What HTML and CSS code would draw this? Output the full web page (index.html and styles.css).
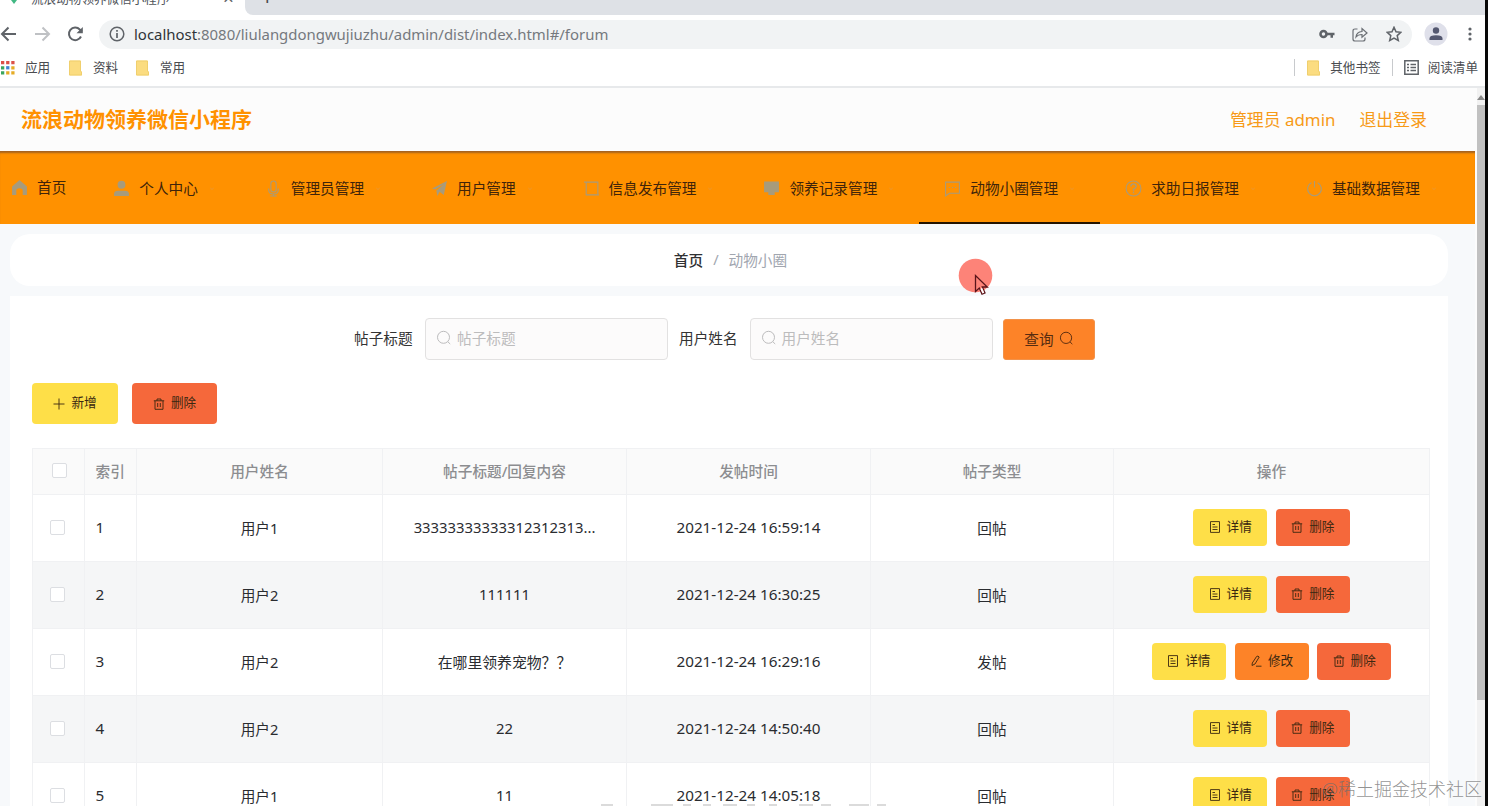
FILE: index.html
```html
<!DOCTYPE html>
<html lang="zh-CN">
<head>
<meta charset="utf-8">
<title>流浪动物领养微信小程序</title>
<link rel="stylesheet" href="styles.css">
</head>
<body>
<svg class="defs" width="0" height="0">
  <symbol id="search" viewBox="0 0 16 16"><circle cx="7.5" cy="7.3" r="6" fill="none" stroke="currentColor"/><path d="M11.8 11.7l2.4 2.3" fill="none" stroke="currentColor"/></symbol>
  <symbol id="trash" viewBox="0 0 12 12"><path d="M.8 2.8h10.4M4 2.8V1h4v1.800M2 2.800v8.500h8V2.800M4.700 5v4M7.300 5v4" fill="none" stroke="currentColor" stroke-width=".9"/></symbol>
  <symbol id="doc" viewBox="0 0 12 12"><path d="M1.500.6h9v10.800h-9zM3.500 3.500h2.500M3.500 6h5M3.500 8.500h5" fill="none" stroke="currentColor" stroke-width=".9"/></symbol>
  <symbol id="pen" viewBox="0 0 12 12"><path d="M2.300 8L6.600 1.500Q8 .4 9.200 2L5 9l-3 1.500zM6 11.200h5.500" fill="none" stroke="currentColor" stroke-width=".9"/></symbol>
  <symbol id="folder" viewBox="0 0 13 16"><path d="M1 .5h10q1 0 1 1V11l1 1v3q0 .5-.5.500H1q-1 0-1-1v-13q0-1 1-1z" fill="#fbdc80"/><path d="M.5 1v14h12v-3l-1-1V1z" fill="none" stroke="#edcb68" stroke-width=".8"/></symbol>
</svg>
<div class="screen">
  <div class="window">
    <div class="tabs">
      <div class="tab"><svg class="fav" width="10" height="5"><path d="M2 0h6L5 4z" fill="#41b883"/></svg><span class="tab-title">流浪动物领养微信小程序</span><span class="tab-x">×</span></div>
      <div class="strip"><span class="plus">+</span></div>
    </div>
    <div class="toolbar">
      <svg class="arrow" width="17" height="16" viewBox="0 0 17 16"><path d="M16 8H2M8.500 1.500L2 8l6.500 6.500" fill="none" stroke="#5f6368" stroke-width="2"/></svg>
      <svg class="arrow" width="17" height="16" viewBox="0 0 17 16"><path d="M1 8h14M8.500 1.500L15 8l-6.500 6.500" fill="none" stroke="#bfc1c4" stroke-width="2"/></svg>
      <svg class="arrow" width="17" height="16" viewBox="0 0 17 16"><path d="M14 10.500A6.300 6.300 0 1 1 12.800 3.500L15 5.500" fill="none" stroke="#5f6368" stroke-width="2"/><path d="M15.800 1v6.300H9.500z" fill="#5f6368"/></svg>
      <div class="address">
        <svg width="16" height="16" viewBox="0 0 16 16"><circle cx="8" cy="8" r="6.800" fill="none" stroke="#5f6368" stroke-width="1.500"/><path d="M8 7v5M8 4v1.700" stroke="#5f6368" stroke-width="1.700"/></svg>
        <span class="url"><b>localhost</b>:8080/liulangdongwujiuzhu/admin/dist/index.html#/forum</span>
        <svg class="key" width="16" height="10" viewBox="0 0 16 10"><circle cx="4.500" cy="5" r="3" fill="none" stroke="#5f6368" stroke-width="2.600"/><path d="M8 3.700h7.500v2.500H14V8.700h-2.500V6.200H8z" fill="#5f6368"/></svg>
        <svg class="share" width="16" height="15" viewBox="0 0 16 15"><path d="M5.500 2H3Q1 2 1 4v8q0 2 2 2h8q2 0 2-2v-1.500M4 10q.5-5 6-5.500V1.500L15 6l-5 4.200V7.500Q6 7.500 4 10z" fill="none" stroke="#6b6f74" stroke-width="1.200"/></svg>
        <svg width="16" height="16" viewBox="0 0 16 16"><path d="M8 1.300l2 4.500 4.900.5-3.700 3.300 1.100 4.900L8 12l-4.300 2.500 1.100-4.900L1.100 6.300 6 5.800z" fill="none" stroke="#5f6368" stroke-width="1.500"/></svg>
      </div>
      <svg class="avatar" width="24" height="24" viewBox="0 0 24 24"><circle cx="12" cy="12" r="11.500" fill="#dfe0ea"/><circle cx="12" cy="8.500" r="3.200" fill="#545870"/><path d="M5.500 18v-1.500q0-3.200 6.500-3.200t6.500 3.200V18z" fill="#545870"/></svg>
      <svg width="4" height="16" viewBox="0 0 4 16"><g fill="#5f6368"><circle cx="2" cy="3" r="1.600"/><circle cx="2" cy="8" r="1.600"/><circle cx="2" cy="13" r="1.600"/></g></svg>
    </div>
    <div class="bookmarks">
      <svg class="apps" width="14" height="14" viewBox="0 0 15 15"><path d="M0 0h3.500v3.500H0zM5.500 0H9v3.500H5.500zM11 0h3.500v3.500H11z" fill="#dc5148"/><path d="M0 5.500h3.500V9H0zM0 11h3.500v3.500H0z" fill="#3ba55d"/><path d="M5.500 5.500H9V9H5.500z" fill="#4285d4"/><path d="M11 5.500h3.500V9H11zM5.500 11H9v3.500H5.500zM11 11h3.500v3.500H11z" fill="#e5ac26"/></svg>
      <span class="bm b1">应用</span>
      <svg class="fold" width="13" height="16"><use href="#folder"/></svg><span class="bm b2">资料</span>
      <svg class="fold" width="13" height="16"><use href="#folder"/></svg><span class="bm b3">常用</span>
      <i class="sep"></i>
      <svg class="fold" width="13" height="16"><use href="#folder"/></svg><span class="bm b4">其他书签</span>
      <i class="sep s2"></i>
      <svg class="list" width="15" height="15" viewBox="0 0 15 15"><path d="M.8.800h13.400v13.400H.8zM3 4.500h2M6.500 4.500H12M3 7.500h2M6.500 7.500H12M3 10.500h2M6.500 10.500H12" fill="none" stroke="#5f6368" stroke-width="1.500"/></svg><span class="bm">阅读清单</span>
    </div>
    <div class="viewport">
      <div class="page">
        <header class="header"><h1>流浪动物领养微信小程序</h1><span class="user">管理员 admin</span><span class="logout">退出登录</span></header>
        <nav class="nav">
          <div class="item home"><svg viewBox="0 0 16 16"><path d="M8 1L1 7v8h4v-5q3-2.500 6 0v5h4V7z" fill="currentColor"/></svg><span>首页</span></div>
          <div class="item"><svg viewBox="0 0 16 16"><circle cx="8" cy="4.500" r="3.700" fill="currentColor"/><path d="M1 15v-2q0-3 4-3h6q4 0 4 3v2z" fill="currentColor"/></svg><span>个人中心</span><i></i></div>
          <div class="item"><svg viewBox="0 0 16 16"><path d="M5.500 9V3.500q0-2.500 2.500-2.500t2.500 2.500V9q0 2.300-2.500 2.300T5.500 9M3.500 8v1.500q0 3.700 4.500 3.700t4.500-3.700V8M8 13v2M5 15h6" fill="none" stroke="currentColor"/></svg><span>管理员管理</span><i></i></div>
          <div class="item"><svg viewBox="0 0 16 16"><path d="M1 8L15 1l-3 13-4-3-2 4-1-5 7-6-8 5z" fill="currentColor"/></svg><span>用户管理</span><i></i></div>
          <div class="item"><svg viewBox="0 0 16 16"><path d="M3 2h11v12H3zM1 2h2M3 14h12" fill="none" stroke="currentColor"/></svg><span>信息发布管理</span><i></i></div>
          <div class="item"><svg viewBox="0 0 16 16"><path d="M1 1.500h14v10h-4V14H5v-2.500H1z" fill="currentColor"/></svg><span>领养记录管理</span><i></i></div>
          <div class="item active"><svg viewBox="0 0 16 16"><path d="M1.500 2h13v10.500H5L1.500 15zM4.500 7h1M7.500 7h1M10.500 7h1" fill="none" stroke="currentColor"/></svg><span>动物小圈管理</span><i></i></div>
          <div class="item"><svg viewBox="0 0 16 16"><circle cx="8" cy="8" r="7" fill="none" stroke="currentColor"/><path d="M5.500 6q0-2.300 2.500-2.300T10.500 6Q10.500 7.500 8 8.500v1.700M8 11v1.500" fill="none" stroke="currentColor" stroke-width="1.300"/></svg><span>求助日报管理</span><i></i></div>
          <div class="item"><svg viewBox="0 0 16 16"><path d="M5 2.500A6.500 6.500 0 1 0 11 2.500M8 1v6" fill="none" stroke="currentColor"/></svg><span>基础数据管理</span><i></i></div>
        </nav>
        <main class="main">
          <div class="crumb"><b>首页</b><span class="slash">/</span><span>动物小圈</span></div>
          <section class="panel">
            <div class="filters">
              <label>帖子标题</label><div class="input"><svg width="16" height="16"><use href="#search"/></svg><span>帖子标题</span></div>
              <label class="l2">用户姓名</label><div class="input"><svg width="16" height="16"><use href="#search"/></svg><span>用户姓名</span></div>
              <div class="query"><span>查询</span><svg width="15" height="15"><use href="#search"/></svg></div>
            </div>
            <div class="tools">
              <div class="btn big yellow"><svg viewBox="0 0 12 12"><path d="M6 .5v11M.5 6h11" stroke="currentColor" stroke-width=".9"/></svg>新增</div>
              <div class="btn big red"><svg><use href="#trash"/></svg>删除</div>
            </div>
            <table class="grid">
              <colgroup><col class="c1"><col class="c1"><col class="c3"><col class="c4"><col class="c4"><col class="c6"><col class="c7"></colgroup>
              <tr><th><span class="box"></span></th><th class="idx">索引</th><th>用户姓名</th><th>帖子标题/回复内容</th><th>发帖时间</th><th>帖子类型</th><th>操作</th></tr>
              <tr><td><span class="box"></span></td><td class="idx">1</td><td>用户1</td><td>33333333333312312313...</td><td>2021-12-24 16:59:14</td><td>回帖</td><td><div class="acts"><div class="btn yellow"><svg><use href="#doc"/></svg>详情</div><div class="btn red"><svg><use href="#trash"/></svg>删除</div></div></td></tr>
              <tr><td><span class="box"></span></td><td class="idx">2</td><td>用户2</td><td>111111</td><td>2021-12-24 16:30:25</td><td>回帖</td><td><div class="acts"><div class="btn yellow"><svg><use href="#doc"/></svg>详情</div><div class="btn red"><svg><use href="#trash"/></svg>删除</div></div></td></tr>
              <tr><td><span class="box"></span></td><td class="idx">3</td><td>用户2</td><td>在哪里领养宠物？？</td><td>2021-12-24 16:29:16</td><td>发帖</td><td><div class="acts"><div class="btn yellow"><svg><use href="#doc"/></svg>详情</div><div class="btn orange"><svg><use href="#pen"/></svg>修改</div><div class="btn red"><svg><use href="#trash"/></svg>删除</div></div></td></tr>
              <tr><td><span class="box"></span></td><td class="idx">4</td><td>用户2</td><td>22</td><td>2021-12-24 14:50:40</td><td>回帖</td><td><div class="acts"><div class="btn yellow"><svg><use href="#doc"/></svg>详情</div><div class="btn red"><svg><use href="#trash"/></svg>删除</div></div></td></tr>
              <tr><td><span class="box"></span></td><td class="idx">5</td><td>用户1</td><td>11</td><td>2021-12-24 14:05:18</td><td>回帖</td><td><div class="acts"><div class="btn yellow"><svg><use href="#doc"/></svg>详情</div><div class="btn red"><svg><use href="#trash"/></svg>删除</div></div></td></tr>
            </table>
          </section>
        </main>
      </div>
      <div class="scrollbar"><span class="up"></span><span class="thumb"></span></div>
    </div>
  </div>
  <svg class="pointer" width="36" height="38" viewBox="0 0 36 38"><circle cx="17.500" cy="17.500" r="16.800" fill="#fd8378"/><path d="M17.500 17.500v16l3.800-3.400 2.700 6 3-1.300-2.700-5.800h5z" fill="#fd8378" stroke="#59141a" stroke-width="1.300"/><path d="M22.500 31l2 4.500 1.700-.8-2.200-5z" fill="#fff"/></svg>
  <svg class="caption-edge" width="290" height="3" viewBox="0 0 290 3"><path d="M2 2h12M52 2h22M84 2h8M104 2h8M124 2h14M148 2h8M170 2h8M200 2h14M222 2h10M250 2h20M278 2h9" stroke="#cfcfcf" stroke-width="1.500"/></svg>
  <div class="mark">@稀土掘金技术社区</div>
</div>
</body>
</html>
```
FILE: styles.css
```css
* { box-sizing: border-box; }
body { margin: 0; background: #000; font-family: "Noto Sans", "Noto Sans CJK SC", sans-serif; color: #333; white-space: nowrap; }
.defs { position: absolute; }
svg { flex: none; display: block; }
.screen { position: relative; width: 1488px; height: 806px; overflow: hidden; background: #080808; }
.window { width: 1485px; height: 806px; background: #fff; display: flex; flex-direction: column; }

/* browser chrome */
.tabs { height: 15px; display: flex; overflow: hidden; flex: none; background: #fff; }
.tab { width: 245px; display: flex; align-items: flex-start; padding-left: 9px; }
.tab-title { font-size: 12.6px; line-height: 18px; margin: -10px 0 0 12px; width: 190px; color: #50545a; }
.tab-x { font-size: 19px; line-height: 20px; margin-top: -12px; margin-left: 2px; color: #5f6368; }
.strip { flex: 1; height: 15px; background: #dee1e6; border-bottom-left-radius: 8px; padding-left: 16px; overflow: hidden; }
.plus { display: block; font-size: 22px; line-height: 20px; margin-top: -14px; color: #4a4d52; }
.toolbar { height: 37px; flex: none; display: flex; align-items: center; padding: 1px 13px 0 0; }
.arrow { margin-right: 16.500px; }
.toolbar > .arrow:nth-child(3) { margin-right: 15px; }
.address { flex: 1; height: 29px; border-radius: 15px; background: #f1f3f4; display: flex; align-items: center; padding: 0 10px 0 10px; }
.url { font-size: 14.930px; line-height: 20px; margin-top: -1px; color: #75797e; margin-left: 9px; flex: 1; }
.url b { font-weight: 400; color: #303338; }
.key { margin-right: 17px; }
.share { margin-right: 18px; }
.avatar { margin: 0 22px 0 12px; }
.toolbar > .avatar { margin-right: 20px; }
.bookmarks { height: 36px; flex: none; display: flex; align-items: center; padding: 0 7px 3px 1px; border-bottom: 2px solid #e7e9eb; }
.bm { font-size: 12.6px; line-height: 18px; color: #4a4c50; }
.b1 { margin-left: 10px; width: 44px; }
.b2 { margin-left: 11px; width: 43px; }
.b3 { margin-left: 11px; flex: 1; }
.sep { width: 1px; height: 17px; background: #c8cacd; margin-right: 12px; }
.b4 { margin: 0 11px 0 10px; }
.s2 { margin-right: 11px; }
.list { margin-right: 9px; }
.viewport { flex: 1; min-height: 0; display: flex; }
.page { width: 1475px; height: 718px; overflow: hidden; display: flex; flex-direction: column; flex: none; background: #f7f9fb; }
.scrollbar { flex: 1; background: #f1f1f1; border-left: 2px solid #fcfcfc; display: flex; flex-direction: column; align-items: stretch; }
.up { border: 4px solid transparent; border-top: 0; border-bottom: 5px solid #888; width: 8px; margin: 7px 0 5px; }
.thumb { height: 595px; background: #c1c1c1; }

/* application header */
.header { height: 63px; flex: none; background: #fcfcfc; display: flex; align-items: center; padding: 0 48px 2px 21px; color: #f79a17; font-size: 16.900px; }
.header h1 { margin: 0; flex: 1; font-size: 21px; line-height: 30px; font-weight: 700; color: #ff9100; }
.user { margin-right: 24px; }
.nav { height: 73px; flex: none; background: #ff9100; display: flex; box-shadow: inset 0 3px 2px -1px #a56320; }
.item { height: 73px; padding: 2px 24px 0; display: flex; align-items: center; font-size: 14.650px; color: #40240a; border-bottom: 2px solid transparent; flex: none; }
.item svg { width: 17px; height: 17px; color: #a79b7c; margin: 1px 9px 0 1px; }
.item i { width: 4px; height: 4px; border: solid #ee962a; border-width: 1px 1px 0 0; transform: rotate(135deg) scale(.7); margin: 0 2px 0 12px; }
.item.home { padding: 0 22px 0 10px; }
.item.active { border-color: #251400; }
.main { flex: 1; min-height: 0; padding: 10px 27px 0 10px; }
.crumb { height: 52px; border-radius: 20px; background: #fff; display: flex; align-items: center; justify-content: center; padding: 0 0 2px 3px; font-size: 14.650px; color: #a1a6af; }
.crumb b { color: #303133; font-weight: 500; }
.slash { margin: 0 10px; }
.panel { margin-top: 10px; height: 600px; background: #fff; padding: 22px 19px 0 22px; }
.filters { display: flex; align-items: center; height: 42px; padding-left: 322px; font-size: 14.650px; }
.filters label { width: 71px; margin-top: -3px; }
.filters .l2 { margin-left: 11px; width: 70.500px; }
.input { width: 243px; height: 42px; border: 1px solid #e2e1e1; border-radius: 4px; background: #fcfbfb; display: flex; align-items: center; padding: 0 0 3px 10px; color: #bcbcbd; }
.input svg { margin-right: 5px; color: #bcbcbd; }
.query { margin-left: 10.500px; width: 92px; height: 41px; border-radius: 3px; background: #fd8328; color: #572c10; display: flex; align-items: center; justify-content: center; gap: 5px; border: 1px solid #f2924a; padding-bottom: 2px; }
.tools { display: flex; gap: 14px; margin-top: 23px; }
.btn { width: 74px; height: 37px; border-radius: 4px; display: flex; align-items: center; justify-content: center; font-size: 12.600px; line-height: 18px; padding-bottom: 1px; color: #3a2710; }
.btn svg { width: 12px; height: 12px; margin: 1px 6px 0 0; }
.btn.big { width: 86px; height: 41px; }
.big.red { width: 85px; }
.yellow { background: #fedf48; }
.orange { background: #fd8328; }
.red { background: #f5683b; }

/* data grid */
.grid { table-layout: fixed; width: 1397px; margin-top: 24px; border-collapse: collapse; font-size: 15.200px; color: #2a2c30; }
.c1 { width: 52px; }
.c3 { width: 246px; }
.c4 { width: 244px; }
.c6 { width: 243px; }
.c7 { width: 316px; }
.grid th, .grid td { border: 1px solid #f0f1f3; padding: 0 0 2px; text-align: center; }
.grid th { height: 46px; background: #fafafa; color: #8c8d90; font-size: 14.650px; font-weight: 500; }
.grid td { height: 67px; font-size: 14.650px; }
.grid td:nth-child(5), .grid td.idx { font-size: 15.250px; }
.grid td:nth-child(4) { font-size: 14.850px; }
.grid tr:nth-child(odd) td { background: #f5f6f7; }
.grid .idx { text-align: left; padding-left: 10.500px; }
.box { display: block; width: 15px; height: 15px; border: 1px solid #dcdee2; border-radius: 2px; background: #fff; margin: 0 auto 0 17px; }
th .box { margin-left: 19px; }
.acts { display: flex; justify-content: center; gap: 8.700px; }

.pointer { position: absolute; left: 958px; top: 258px; }
.caption-edge { position: absolute; left: 599px; top: 803px; }
.mark { position: absolute; right: 6px; top: 776px; font-size: 18px; line-height: 26px; color: rgba(110, 110, 110, .75); font-weight: 300; }
```
